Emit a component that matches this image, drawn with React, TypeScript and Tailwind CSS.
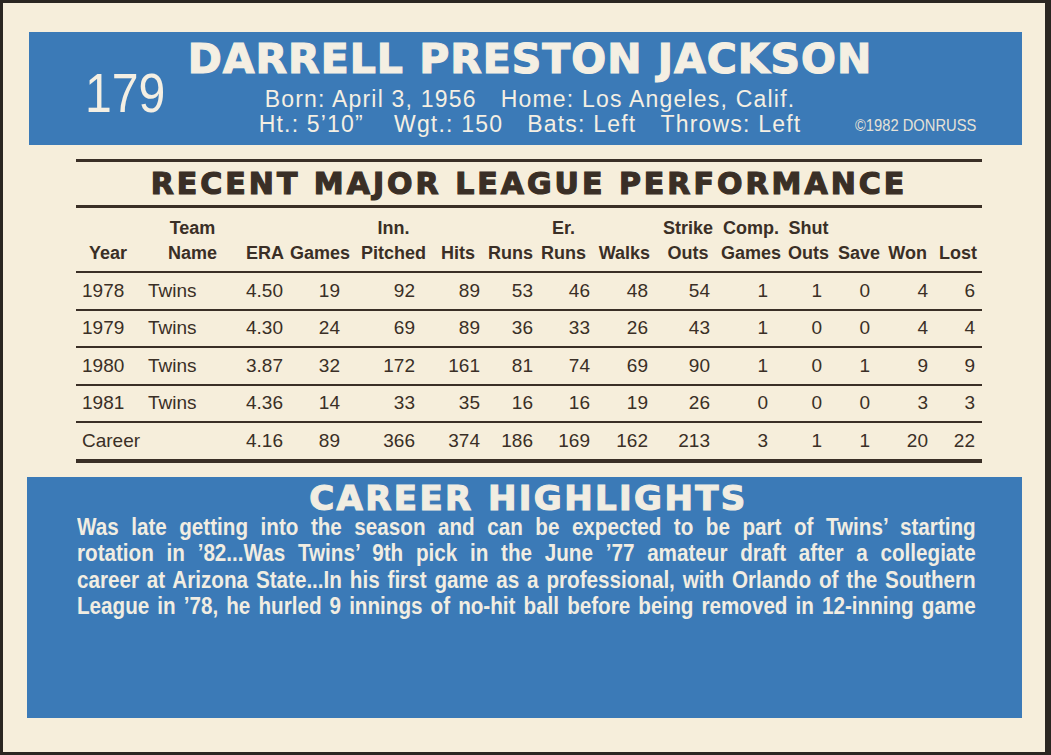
import React from 'react';

const WIDE = "font-['DejaVu_Sans','Liberation_Sans',sans-serif] font-bold [-webkit-text-stroke:1.2px_currentColor]";
const SANS = "font-['Liberation_Sans','Arial',sans-serif]";

type Col = { top: string; bottom: string; hc: string; dc: string };

const COLS: Col[] = [
  { top: '', bottom: 'Year', hc: 'justify-start pl-[13px]', dc: 'text-left pl-[6px]' },
  { top: 'Team', bottom: 'Name', hc: 'justify-center pl-[5px]', dc: 'text-left pl-[8px]' },
  { top: '', bottom: 'ERA', hc: 'justify-end pr-[6px]', dc: 'text-right pr-[7px]' },
  { top: '', bottom: 'Games', hc: 'justify-end pr-[6px]', dc: 'text-right pr-[16px]' },
  { top: 'Inn.', bottom: 'Pitched', hc: 'justify-end pr-[6px]', dc: 'text-right pr-[17px]' },
  { top: '', bottom: 'Hits', hc: 'justify-end pr-[7px]', dc: 'text-right pr-[2px]' },
  { top: '', bottom: 'Runs', hc: 'justify-end pr-[5px]', dc: 'text-right pr-[5px]' },
  { top: 'Er.', bottom: 'Runs', hc: 'justify-end pr-[8px]', dc: 'text-right pr-[4px]' },
  { top: '', bottom: 'Walks', hc: 'justify-end pr-[6px]', dc: 'text-right pr-[8px]' },
  { top: 'Strike', bottom: 'Outs', hc: 'justify-end pr-[5px]', dc: 'text-right pr-[8px]' },
  { top: 'Comp.', bottom: 'Games', hc: 'justify-end pr-[5px]', dc: 'text-right pr-[18px]' },
  { top: 'Shut', bottom: 'Outs', hc: 'justify-end pr-[7px]', dc: 'text-right pr-[14px]' },
  { top: '', bottom: 'Save', hc: 'justify-end pr-[6px]', dc: 'text-right pr-[16px]' },
  { top: '', bottom: 'Won', hc: 'justify-end pr-[7px]', dc: 'text-right pr-[6px]' },
  { top: '', bottom: 'Lost', hc: 'justify-end pr-[5px]', dc: 'text-right pr-[7px]' },
];

const ROWS: string[][] = [
  ['1978', 'Twins', '4.50', '19', '92', '89', '53', '46', '48', '54', '1', '1', '0', '4', '6'],
  ['1979', 'Twins', '4.30', '24', '69', '89', '36', '33', '26', '43', '1', '0', '0', '4', '4'],
  ['1980', 'Twins', '3.87', '32', '172', '161', '81', '74', '69', '90', '1', '0', '1', '9', '9'],
  ['1981', 'Twins', '4.36', '14', '33', '35', '16', '16', '19', '26', '0', '0', '0', '3', '3'],
  ['Career', '', '4.16', '89', '366', '374', '186', '169', '162', '213', '3', '1', '1', '20', '22'],
];

const HIGHLIGHTS = [
  "Was late getting into the season and can be expected to be part of Twins\u2019 starting",
  "rotation in \u201982...Was Twins\u2019 9th pick in the June \u201977 amateur draft after a collegiate",
  "career at Arizona State...In his first game as a professional, with Orlando of the Southern",
  "League in \u201978, he hurled 9 innings of no-hit ball before being removed in 12-inning game",
];

const GRID = 'grid grid-cols-[64px_100px_50px_66px_76px_50px_56px_56px_62px_62px_68px_50px_50px_48px_48px]';
const INK = 'bg-[#3a2f26]';

export default function App() {
  return (
    <div className="w-[1051px] h-[755px] bg-[#2a2621] overflow-hidden">
      <div className="ml-[3px] mt-[3px] w-[1042px] h-[749px] bg-[#f6eedb] pt-[29px] flex flex-col">
        {/* name bar */}
        <div className="ml-[26px] w-[993px] h-[113px] shrink-0 bg-[#3b7ab7] flex text-[#f4efe3]">
          <div className="w-[180px] shrink-0 pl-[56px] pt-[33px]">
            <span className={`${SANS} inline-block text-[56px] leading-none scale-x-[0.86] origin-left`}>179</span>
          </div>
          <div className="flex-1 min-w-0 flex flex-col items-center pt-[5px]">
            <div className={`${WIDE} text-[41px] tracking-[1px] leading-[44px] whitespace-nowrap`}>DARRELL PRESTON JACKSON</div>
            <div className={`${SANS} mt-[6px] text-[23px] tracking-[1.2px] leading-[25px] whitespace-nowrap flex gap-[24px]`}>
              <span>Born: April 3, 1956</span>
              <span>Home: Los Angeles, Calif.</span>
            </div>
            <div className={`${SANS} text-[23px] tracking-[1.2px] leading-[25px] whitespace-nowrap flex gap-[24px]`}>
              <span className="mr-[6px]">Ht.: 5&#8217;10&#8221;</span>
              <span>Wgt.: 150</span>
              <span>Bats: Left</span>
              <span>Throws: Left</span>
            </div>
          </div>
          <div className="w-[171px] shrink-0 flex items-end pb-[11px] pl-[4px]">
            <span className={`${SANS} inline-block text-[16px] leading-none text-[#e6e2d8] whitespace-nowrap scale-x-[0.92] origin-left`}>&copy;1982 DONRUSS</span>
          </div>
        </div>

        {/* stats */}
        <div className="ml-[73px] mt-[14px] w-[906px] shrink-0 text-[#3a2f26]">
          <div className={`h-[3px] ${INK}`} />
          <div className={`${WIDE} h-[43px] flex items-center justify-center text-[30px] tracking-[3px] leading-none`}>
            RECENT MAJOR LEAGUE PERFORMANCE
          </div>
          <div className={`h-[3px] ${INK}`} />
          <div className={`${GRID} ${SANS} font-bold text-[18px] leading-[25px] pt-[8px] pb-[5px]`}>
            {COLS.map((c, i) => (
              <div key={i} className={`flex ${c.hc}`}>
                <div className="flex flex-col items-center">
                  <span className="h-[25px]">{c.top}</span>
                  <span>{c.bottom}</span>
                </div>
              </div>
            ))}
          </div>
          {ROWS.map((r, ri) => (
            <div key={ri}>
              <div className={`h-[2px] ${INK}`} />
              <div className={`${GRID} ${SANS} text-[19px] h-[35.5px] items-center`}>
                {r.map((v, ci) => (
                  <div key={ci} className={COLS[ci].dc}>{v}</div>
                ))}
              </div>
            </div>
          ))}
          <div className={`h-[4px] ${INK}`} />
        </div>

        {/* highlights */}
        <div className="ml-[24px] mt-[14px] w-[995px] h-[241px] shrink-0 bg-[#3b7ab7] text-[#f1ede2] pl-[50px] pt-[5px]">
          <div className={`${WIDE} w-[899px] text-[34px] tracking-[2.4px] leading-[32px] text-center pl-[4px]`}>CAREER HIGHLIGHTS</div>
          <div className={`${SANS} font-bold text-[24px] leading-[26.5px]`}>
            {HIGHLIGHTS.map((l, i) => (
              <div key={i} className="w-[1045px] whitespace-nowrap text-justify [text-align-last:justify] scale-x-[0.86] origin-left">
                {l}
              </div>
            ))}
          </div>
        </div>
      </div>
    </div>
  );
}
